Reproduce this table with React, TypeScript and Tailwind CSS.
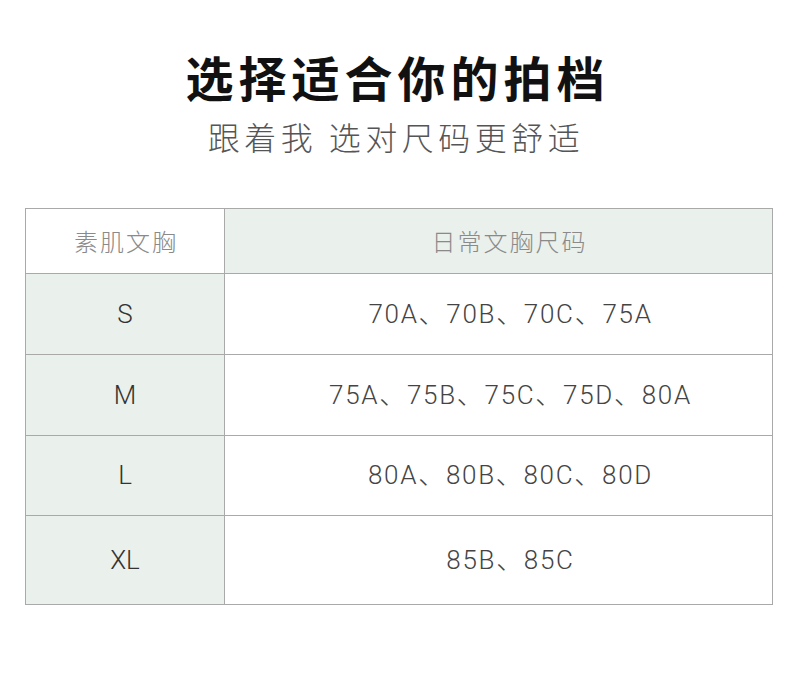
const rows = [
  { size: 'S', cups: '70A、70B、70C、75A', h: 'h-[81px]' },
  { size: 'M', cups: '75A、75B、75C、75D、80A', h: 'h-[81px]' },
  { size: 'L', cups: '80A、80B、80C、80D', h: 'h-[80px]' },
  { size: 'XL', cups: '85B、85C', h: 'h-[88px]' },
];

export default function App() {
  return (
    <div className="w-[790px] h-[680px] bg-white font-['Noto_Sans_CJK_SC',sans-serif] overflow-hidden">
      {/* Heading */}
      <div className="pt-[44px] flex flex-col items-center">
        <h1 className="text-[48px] leading-[64px] font-bold tracking-[5px] text-[#111] pl-[5px]">选择适合你的拍档</h1>
        <p className="mt-[6px] text-[32px] leading-[44px] tracking-[4.5px] text-[#555] font-light pl-[2px]">跟着我 选对尺码更舒适</p>
      </div>

      {/* Size table */}
      <div className="mt-[50px] ml-[25px] w-[748px] border border-[#a9a9a9]">
        <div className="flex h-[65px] border-b border-[#a9a9a9]">
          <div className="w-[199px] shrink-0 flex items-center justify-center pl-[2px] border-r border-[#a9a9a9] bg-white text-[24px] tracking-[2px] font-light text-[#8a8a8a]">
            素肌文胸
          </div>
          <div className="flex-1 flex items-center justify-center pl-[22px] bg-[#eaf0eb] text-[24px] tracking-[2px] font-light text-[#8a8a8a]">
            日常文胸尺码
          </div>
        </div>
        {rows.map((r, i) => (
          <div key={r.size} className={`flex ${r.h} ${i < rows.length - 1 ? 'border-b border-[#a9a9a9]' : ''}`}>
            <div className="w-[199px] shrink-0 flex items-center justify-center bg-[#eaf0eb] border-r border-[#a9a9a9] font-['Roboto','Noto_Sans_CJK_SC',sans-serif] font-light text-[26px] text-[#333]">
              {r.size}
            </div>
            <div className="flex-1 flex items-center justify-center pl-[24px] bg-white font-['Roboto','Noto_Sans_CJK_SC',sans-serif] font-light text-[26px] tracking-[1.7px] text-[#444]">
              {r.cups}
            </div>
          </div>
        ))}
      </div>
    </div>
  );
}
